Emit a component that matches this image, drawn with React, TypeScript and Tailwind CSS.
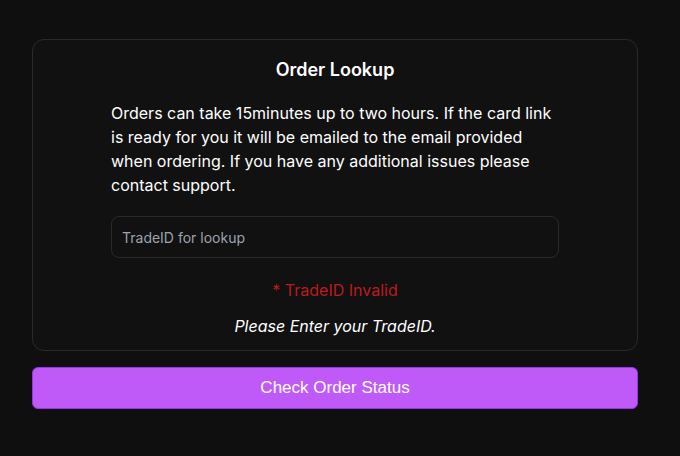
export default function App() {
  return (
    <div className="min-h-[456px] w-full bg-[#0f0f0f] pl-8 pr-[42px] pt-[39px]" style={{ fontFamily: "Inter, 'Noto Sans', sans-serif" }}>
      <div className="rounded-xl border border-[#2a2a2a] bg-[#111111] px-4 pt-4 pb-3">
        <h1 className="text-center text-lg font-semibold leading-7 text-white">Order Lookup</h1>
        <div className="mx-auto mt-[17px] w-[448px]">
          <p className="text-base leading-6 text-white">
            Orders can take 15minutes up to two hours. If the card link is ready for you it will be emailed to the email provided when ordering. If you have any additional issues please contact support.
          </p>
          <input
            className="mt-[19px] h-[42px] w-full rounded-lg border border-[#2a2a2a] bg-[#111111] px-[10px] text-sm text-white placeholder:text-[#9ca3af] outline-none"
            placeholder="TradeID for lookup"
          />
          <p className="mt-5 text-center text-base leading-6 text-[#b91c1c]">* TradeID Invalid</p>
          <p className="mt-3 text-center text-base italic leading-6 text-white">Please Enter your TradeID.</p>
        </div>
      </div>
      <button
        className="mt-4 flex h-[42px] w-full items-center justify-center rounded-md border border-[#9333ea] bg-[#bf5af8] text-[17px] text-white"
        style={{ fontFamily: "'Liberation Sans', Arial, sans-serif" }}
      >
        Check Order Status
      </button>
    </div>
  );
}
